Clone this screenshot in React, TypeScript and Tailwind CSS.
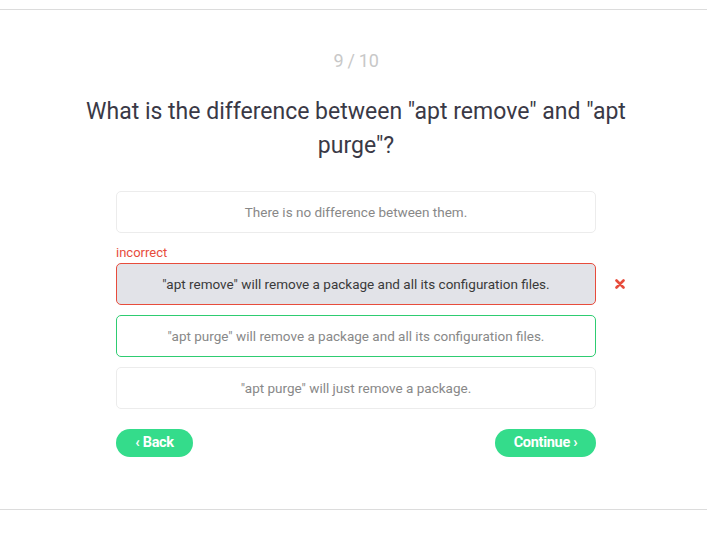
import { useState } from "react";

const options = [
  { text: "There is no difference between them.", state: "idle" },
  { text: "\"apt remove\" will remove a package and all its configuration files.", state: "wrong" },
  { text: "\"apt purge\" will remove a package and all its configuration files.", state: "right" },
  { text: "\"apt purge\" will just remove a package.", state: "idle" },
];

function TimesIcon() {
  return (
    <svg width="10" height="10" viewBox="0 0 10 10" className="text-[#e74c3c]">
      <path d="M1.5 1.5 L8.5 8.5 M8.5 1.5 L1.5 8.5" stroke="currentColor" strokeWidth="2.6" strokeLinecap="round" />
    </svg>
  );
}

export default function App() {
  const [picked] = useState(1);

  return (
    <div className="h-[547px] w-full bg-white pt-[9px] font-['Roboto',sans-serif]">
      <div className="flex h-[501px] flex-col items-center border-y border-[#dcdcdc] pl-[5px]">
        <div className="mt-[41px] text-[18px] leading-[20px] tracking-[-0.3px] text-[#c8c8c8]">9 / 10</div>

        <h1 className="mt-[24px] w-[580px] text-center text-[23px] leading-[34px] text-[#3a3946]">
          What is the difference between "apt remove" and "apt purge"?
        </h1>

        <div className="mt-[28px] flex w-[480px] flex-col">
          {options.map((o, i) => (
            <div key={i} className={i === 0 ? "" : "mt-[10px]"}>
              {o.state === "wrong" && i === picked && (
                <div className="mt-[2px] mb-[2px] text-[13px] leading-[16px] text-[#e74c3c]">
                  incorrect
                </div>
              )}
              <div className="relative">
                <div
                  className={
                    "flex h-[42px] items-center justify-center rounded-[5px] border text-[13.5px] " +
                    (o.state === "wrong"
                      ? "border-[#e74c3c] bg-[#e2e3e8] text-[#3a3a3a]"
                      : o.state === "right"
                        ? "border-[#2ecc71] bg-white text-[#888888]"
                        : "border-[#ececec] bg-white text-[#888888]")
                  }
                >
                  {o.text}
                </div>
                {o.state === "wrong" && (
                  <div className="absolute left-[499px] top-[16px] flex">
                    <TimesIcon />
                  </div>
                )}
              </div>
            </div>
          ))}
        </div>

        <div className="mt-[20px] flex w-[480px] items-center justify-between">
          <button className="flex h-[28px] w-[77px] items-center justify-center rounded-full bg-[#34dc8b] text-[14.5px] font-bold tracking-[-0.3px] text-white">
            ‹ Back
          </button>
          <button className="flex h-[28px] w-[101px] items-center justify-center rounded-full bg-[#34dc8b] text-[14.5px] font-bold tracking-[-0.3px] text-white">
            Continue ›
          </button>
        </div>
      </div>
    </div>
  );
}
